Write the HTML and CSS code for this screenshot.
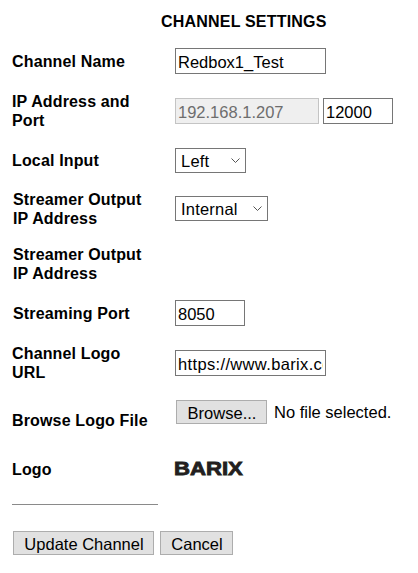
FILE: index.html
```html
<!DOCTYPE html>
<html lang="en">
<head>
    <meta charset="UTF-8">
    <meta name="viewport" content="width=device-width, initial-scale=1.0">
    <title>Channel Settings</title>
    <link rel="stylesheet" href="styles.css">
</head>
<body>
    <h2>CHANNEL SETTINGS</h2>

    <form class="settings">
        <label for="channel_name">Channel Name</label>
        <div class="field">
            <input type="text" id="channel_name" class="input-wide" value="Redbox1_Test">
        </div>

        <label for="ip_address">IP Address and<br>Port</label>
        <div class="field">
            <input type="text" id="ip_address" class="input-ip" value="192.168.1.207" disabled>
            <input type="text" id="port" class="input-port" value="12000">
        </div>

        <label for="local_input">Local Input</label>
        <div class="field">
            <select id="local_input" class="select-input">
                <option>Left</option>
            </select>
        </div>

        <label for="streamer_output" class="indent">Streamer Output<br>IP Address</label>
        <div class="field">
            <select id="streamer_output" class="select-output">
                <option>Internal</option>
            </select>
        </div>

        <label class="indent">Streamer Output<br>IP Address</label>
        <div class="field"></div>

        <label for="streaming_port" class="indent">Streaming Port</label>
        <div class="field">
            <input type="text" id="streaming_port" class="input-short" value="8050">
        </div>

        <label for="logo_url">Channel Logo<br>URL</label>
        <div class="field">
            <input type="text" id="logo_url" class="input-wide input-url" value="https://www.barix.com/logo.png">
        </div>

        <label for="logo_file" class="label-browse">Browse Logo File</label>
        <div class="field field-browse">
            <button type="button" id="logo_file" class="btn btn-browse">Browse...</button>
            <span class="file-name">No file selected.</span>
        </div>

        <label>Logo</label>
        <div class="field">
            <span class="logo">BARIX</span>
        </div>
    </form>

    <hr>

    <div class="actions">
        <button type="button" class="btn btn-update">Update Channel</button>
        <button type="button" class="btn btn-cancel">Cancel</button>
    </div>
</body>
</html>
```

FILE: styles.css
```css
body {
    font-family: "Liberation Sans", Arial, sans-serif;
    margin: 0;
    padding: 0;
    background-color: #ffffff;
    color: #000000;
    overflow: hidden;
}

h2 {
    margin: 0;
    padding: 13px 0 0 161px;
    height: 23px;
    font-size: 16px;
    line-height: 18px;
    letter-spacing: 0.2px;
    font-weight: bold;
}

.settings {
    display: grid;
    grid-template-columns: 175px 1fr;
    grid-template-rows: 50px 50px 48px 49px 62px 36px 64px 54px 40px;
}

label {
    align-self: center;
    padding-left: 12px;
    font-size: 16px;
    line-height: 19px;
    letter-spacing: 0.15px;
    font-weight: bold;
}

.indent {
    padding-left: 13px;
}

.label-browse {
    margin-bottom: 4px;
}

.field {
    display: flex;
    align-items: center;
    gap: 4px;
}

input, select {
    box-sizing: border-box;
    height: 26px;
    margin: 0;
    font-family: inherit;
    font-size: 16.5px;
    color: #000000;
    background-color: #ffffff;
    border: 1px solid #767676;
    border-radius: 0;
}

input {
    padding: 2px 2px 0;
}

input:disabled {
    color: #6d6d6d;
    background-color: #efefef;
    border-color: #c4c4c4;
}

.input-wide {
    width: 151px;
}

.input-url {
    letter-spacing: 0.35px;
}

.input-ip {
    width: 144px;
}

.input-port {
    width: 70px;
}

.input-short {
    width: 70px;
}

select {
    appearance: none;
    height: 25px;
    padding: 1px 0 0 5px;
    letter-spacing: 0.2px;
    background-image: url("data:image/svg+xml,%3Csvg xmlns='http://www.w3.org/2000/svg' width='9' height='5'%3E%3Cpath d='M0.5 0.5L4.5 4.5L8.5 0.5' fill='none' stroke='%23555555'/%3E%3C/svg%3E");
    background-repeat: no-repeat;
    background-position: right 5px center;
}

.select-input {
    width: 71px;
}

.select-output {
    width: 93px;
}

.field-browse {
    align-self: start;
    padding: 5px 0 0 1px;
    gap: 7px;
}

.btn {
    box-sizing: border-box;
    height: 24px;
    padding: 2px 0 0 1px;
    font-family: inherit;
    font-size: 16.5px;
    color: #000000;
    background-color: #e1e1e1;
    border: 1px solid #adadad;
    border-radius: 0;
}

.btn-browse {
    width: 91px;
}

.file-name {
    font-size: 16.5px;
    white-space: nowrap;
}

.logo {
    display: inline-block;
    margin-left: -1px;
    font-size: 18px;
    font-weight: bold;
    line-height: 16px;
    color: #231f20;
    -webkit-text-stroke: 0.8px #231f20;
    transform: scaleX(1.23);
    transform-origin: left center;
}

hr {
    width: 146px;
    height: 1px;
    margin: 15px 0 0 12px;
    border: none;
    background-color: #8a8a8a;
}

.actions {
    display: flex;
    gap: 6px;
    padding: 26px 0 0 13px;
}

.btn-update {
    width: 141px;
}

.btn-cancel {
    width: 73px;
}
```
